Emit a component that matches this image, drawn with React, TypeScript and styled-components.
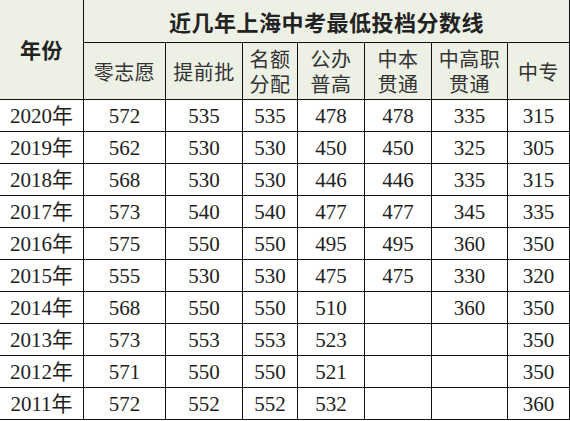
import React from "react";
import styled, { createGlobalStyle } from "styled-components";

const Global = createGlobalStyle`
  html, body { margin: 0; padding: 0; background: #ffffff; }
  #root { width: 570px; }
`;

const Table = styled.table`
  border-collapse: separate;
  border-spacing: 0;
  table-layout: fixed;
  width: 570px;
  font-family: "Liberation Serif", "Noto Sans CJK SC", serif;
  color: #1e1e1e;
`;

const HeadCell = styled.th<{ $h: number; $bold?: boolean; $size?: number }>`
  box-sizing: border-box;
  height: ${(p) => p.$h}px;
  padding: 0;
  background: #edf0e4;
  border-right: 1px solid #111;
  border-bottom: 1px solid #111;
  font-family: "Noto Sans CJK SC", sans-serif;
  font-weight: ${(p) => (p.$bold ? 700 : 400)};
  font-size: ${(p) => p.$size ?? 20}px;
  line-height: 25px;
  color: ${(p) => (p.$bold ? "#222" : "#333")};
  text-align: center;
  vertical-align: middle;
  letter-spacing: ${(p) => (p.$bold ? "0.5px" : "0.5px")};
`;

const Cell = styled.td`
  box-sizing: border-box;
  height: 32px;
  padding: 0;
  border-right: 1px solid #111;
  border-bottom: 1px solid #111;
  font-size: 21px;
  line-height: 24px;
  text-align: center;
  vertical-align: middle;
  padding-top: 1px;
`;

const widths = [84, 82, 77, 55, 67, 67, 76, 62];

const cols: React.ReactNode[] = [
  "零志愿",
  "提前批",
  <>名额<br />分配</>,
  <>公办<br />普高</>,
  <>中本<br />贯通</>,
  <>中高职<br />贯通</>,
  "中专",
];

const rows: [string, string[]][] = [
  ["2020", ["572", "535", "535", "478", "478", "335", "315"]],
  ["2019", ["562", "530", "530", "450", "450", "325", "305"]],
  ["2018", ["568", "530", "530", "446", "446", "335", "315"]],
  ["2017", ["573", "540", "540", "477", "477", "345", "335"]],
  ["2016", ["575", "550", "550", "495", "495", "360", "350"]],
  ["2015", ["555", "530", "530", "475", "475", "330", "320"]],
  ["2014", ["568", "550", "550", "510", "", "360", "350"]],
  ["2013", ["573", "553", "553", "523", "", "", "350"]],
  ["2012", ["571", "550", "550", "521", "", "", "350"]],
  ["2011", ["572", "552", "552", "532", "", "", "360"]],
];

export default function App() {
  return (
    <>
      <Global />
      <Table>
        <colgroup>
          {widths.map((w, i) => (
            <col key={i} style={{ width: w }} />
          ))}
        </colgroup>
        <thead>
          <tr>
            <HeadCell rowSpan={2} $h={100} $bold $size={21}>
              年份
            </HeadCell>
            <HeadCell colSpan={7} $h={43} $bold $size={22}>
              近几年上海中考最低投档分数线
            </HeadCell>
          </tr>
          <tr>
            {cols.map((c, i) => (
              <HeadCell key={i} $h={57}>
                {c}
              </HeadCell>
            ))}
          </tr>
        </thead>
        <tbody>
          {rows.map(([year, vals]) => (
            <tr key={year}>
              <Cell>{year}年</Cell>
              {vals.map((v, i) => (
                <Cell key={i}>{v}</Cell>
              ))}
            </tr>
          ))}
        </tbody>
      </Table>
    </>
  );
}
